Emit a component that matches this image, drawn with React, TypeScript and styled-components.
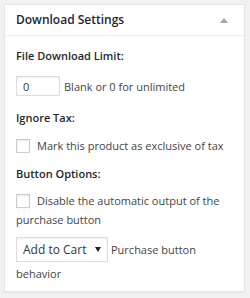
import React from 'react';
import styled, { createGlobalStyle } from 'styled-components';

const GlobalStyle = createGlobalStyle`
  html, body {
    margin: 0;
    padding: 0;
    background: #f1f1f1;
  }
  body {
    font-family: "Open Sans", "Noto Sans", sans-serif;
    color: #444;
  }
`;

const Page = styled.div`
  padding: 4px 0 0 4px;
  width: 250px;
  height: 298px;
  box-sizing: border-box;
`;

const Postbox = styled.div`
  width: 241px;
  box-sizing: border-box;
  background: #fff;
  border: 1px solid #e5e5e5;
  box-shadow: 0 1px 1px rgba(0, 0, 0, 0.04);
`;

const Header = styled.div`
  height: 30px;
  display: flex;
  align-items: center;
  justify-content: space-between;
  padding: 0 11px;
  border-bottom: 1px solid #eee;
`;

const Title = styled.h2`
  margin: 0;
  font-size: 12px;
  font-weight: 600;
  line-height: 1;
  color: #23282d;
`;

const Toggle = styled.svg`
  width: 8px;
  height: 5px;
  margin-right: 5px;
  fill: #a0a5aa;
`;

const Inside = styled.div`
  padding: 10px 11px 5px;
  font-size: 11px;
  line-height: 19px;
`;

const Label = styled.p`
  margin: 0 0 ${({ $gap }: { $gap: number }) => $gap}px;
  font-weight: 600;
  color: #23282d;
`;

const Row = styled.p`
  margin: 0 0 ${({ $gap }: { $gap: number }) => $gap}px;
`;

const InputRow = styled.div`
  display: flex;
  align-items: center;
  gap: 4px;
  height: 20px;
  margin-bottom: ${({ $gap }: { $gap: number }) => $gap}px;
`;

const NumberInput = styled.input`
  width: 44px;
  height: 20px;
  box-sizing: border-box;
  margin: 0;
  padding: 0 6px;
  border: 1px solid #ddd;
  box-shadow: inset 0 1px 2px rgba(0, 0, 0, 0.07);
  font-family: inherit;
  font-size: 11px;
  color: #32373c;
  outline: none;
`;

const Check = styled.input`
  appearance: none;
  width: 14px;
  height: 14px;
  margin: 0 7px 0 0;
  border: 1px solid #ccc;
  box-shadow: inset 0 1px 2px rgba(0, 0, 0, 0.1);
  background: #fff;
  vertical-align: -3px;
`;

const SelectWrap = styled.span`
  position: relative;
  display: inline-block;
  margin-right: 3px;
  vertical-align: baseline;
`;

const Select = styled.select`
  appearance: none;
  width: 92px;
  height: 25px;
  box-sizing: border-box;
  padding: 0 0 0 6px;
  border: 1px solid #ddd;
  border-radius: 0;
  background: #fff;
  box-shadow: inset 0 1px 2px rgba(0, 0, 0, 0.07);
  font-family: inherit;
  font-size: 12px;
  color: #32373c;
  outline: none;
`;

const Caret = styled.svg`
  position: absolute;
  right: 7px;
  top: 10px;
  width: 6px;
  height: 5px;
  fill: #222;
  pointer-events: none;
`;

const Behavior = styled.p`
  margin: 0;
  line-height: 24px;
`;

export default function App() {
  return (
    <Page>
      <GlobalStyle />
      <Postbox>
        <Header>
          <Title>Download Settings</Title>
          <Toggle viewBox="0 0 8 5">
            <polygon points="4,0 8,5 0,5" />
          </Toggle>
        </Header>
        <Inside>
          <Label $gap={11}>File Download Limit:</Label>
          <InputRow $gap={12}>
            <NumberInput type="text" defaultValue="0" />
            <span>Blank or 0 for unlimited</span>
          </InputRow>
          <Label $gap={9}>Ignore Tax:</Label>
          <Row $gap={9}>
            <Check type="checkbox" />
            Mark this product as exclusive of tax
          </Row>
          <Label $gap={8}>Button Options:</Label>
          <Row $gap={8}>
            <Check type="checkbox" />
            Disable the automatic output of the purchase button
          </Row>
          <Behavior>
            <SelectWrap>
              <Select defaultValue="add">
                <option value="add">Add to Cart</option>
                <option value="buy">Buy Now</option>
              </Select>
              <Caret viewBox="0 0 6 5">
                <polygon points="0,0 6,0 3,5" />
              </Caret>
            </SelectWrap>
            Purchase button behavior
          </Behavior>
        </Inside>
      </Postbox>
    </Page>
  );
}
